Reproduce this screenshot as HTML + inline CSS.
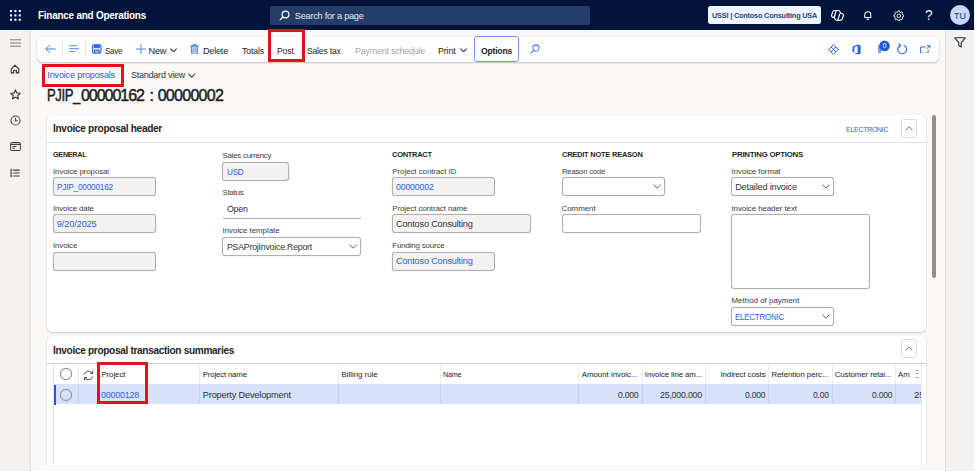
<!DOCTYPE html>
<html lang="en">
<head>
<meta charset="utf-8">
<title>Invoice proposals - Finance and Operations</title>
<style>
*{box-sizing:border-box;margin:0;padding:0}
html,body{width:977px;height:472px;overflow:hidden;background:#fff}
body{font-family:"Liberation Sans",sans-serif;color:#201f1e;position:relative}
#app{position:absolute;left:0;top:0;width:974px;height:470.6px;background:#faf9f8;overflow:hidden}
.abs{position:absolute}
.t{position:absolute;white-space:nowrap;line-height:1}
/* top bar */
#topbar{left:0;top:0;width:974px;height:30px;background:#03143a}
#search{left:270.3px;top:5.8px;width:320px;height:18.8px;background:#253d69;border-radius:2.5px}
#company{left:708.4px;top:5.7px;width:113px;height:18.8px;background:#eef3fd;border-radius:2.5px}
/* left nav */
#leftnav{left:0;top:30px;width:30.8px;height:441px;background:#f3f2f1;box-shadow:inset -1.5px 0 0 #e5e3e1}
#rightpane{left:944.6px;top:30px;width:29.4px;height:441px;background:#f3f2f1;border-left:1px solid #e1dfdd}
/* toolbar */
#toolbar{left:37px;top:37px;width:902px;height:25px;background:#fff;border-radius:5px;box-shadow:0 1px 2px rgba(0,0,0,.22),0 0 1px rgba(0,0,0,.15)}
.tb{font-size:9.5px;color:#242424;top:45px}
.red{position:absolute;border:3px solid #e3111c}
/* cards */
.card{position:absolute;background:#fff;border-radius:5px;box-shadow:0 1px 2px rgba(0,0,0,.18),0 0 1px rgba(0,0,0,.18)}
.sep{position:absolute;height:1px;background:#e1dfdd}
.h{font-size:11px;font-weight:bold;color:#242424}
.g{font-size:8px;font-weight:bold;color:#201f1e}
.l{font-size:8px;color:#484644}
.in{position:absolute;border:1px solid #b1afad;border-radius:3px;background:#fff;height:19.4px;box-shadow:0 0 1px #bbb9b7}
.ro{background:#f3f2f1}
.v{font-size:9.5px;color:#323130}
.b{color:#2b63d9}
.colbtn{position:absolute;width:16.2px;height:19.2px;border:1px solid #dddbd9;border-radius:3px;background:#fff}
.vl{position:absolute;width:1px;background:rgba(0,0,0,.075)}
.gh{font-size:8px;color:#242424;top:371px}
.gd{font-size:9.5px;color:#323130;top:390px}
</style>
</head>
<body>
<div id="app">

<!-- TOP BAR -->
<div id="topbar" class="abs"></div>
<svg class="abs" style="left:10.2px;top:10.2px" width="10.8" height="10.8" viewBox="0 0 11.2 11.2" fill="#fff">
<rect x="0" y="0" width="2.2" height="2.2"/><rect x="4.5" y="0" width="2.2" height="2.2"/><rect x="9" y="0" width="2.2" height="2.2"/>
<rect x="0" y="4.5" width="2.2" height="2.2"/><rect x="4.5" y="4.5" width="2.2" height="2.2"/><rect x="9" y="4.5" width="2.2" height="2.2"/>
<rect x="0" y="9" width="2.2" height="2.2"/><rect x="4.5" y="9" width="2.2" height="2.2"/><rect x="9" y="9" width="2.2" height="2.2"/>
</svg>
<div id="search" class="abs"></div>
<svg class="abs" style="left:279px;top:10px" width="11" height="11" viewBox="0 0 11 11" fill="none" stroke="#fff" stroke-width="1.2"><circle cx="6.5" cy="4.5" r="3.4"/><path d="M4 7 L0.8 10.2"/></svg>
<div id="company" class="abs"></div>
<!-- topbar icons -->
<svg class="abs" style="left:830px;top:9px" width="14" height="13" viewBox="0 0 14 13" fill="none" stroke="#fff" stroke-width="1.2"><path d="M5 1.5 h3.2 a2 2 0 0 1 1.9 1.4 l0.5 1.6 h1 a1.8 1.8 0 0 1 1.7 2.4 l-1 3 a2 2 0 0 1 -1.9 1.4 h-3.6 a2 2 0 0 1 -1.9 -1.4 l-0.5 -1.6 h-1 a1.8 1.8 0 0 1 -1.7 -2.4 l1 -3 a2 2 0 0 1 1.9 -1.4 z"/><path d="M6.2 1.8 l-2 6.5 M9.8 4.6 l-2 6.5"/></svg>
<svg class="abs" style="left:863px;top:10.3px" width="9.6" height="11" viewBox="0 0 12 13" fill="none" stroke="#fff" stroke-width="1.3"><path d="M2.2 9 V5.6 a3.8 3.8 0 0 1 7.6 0 V9 z"/><path d="M4.7 10.5 a1.4 1.4 0 0 0 2.6 0" /></svg>
<svg class="abs" style="left:892.6px;top:9.6px" width="11.6" height="11.6" viewBox="0 0 13 13" fill="none" stroke="#fff" stroke-linejoin="round"><path d="M10.89 5.52 L12.06 5.80 L12.06 7.20 L10.89 7.48 L10.30 8.91 L10.92 9.93 L9.93 10.92 L8.91 10.30 L7.48 10.89 L7.20 12.06 L5.80 12.06 L5.52 10.89 L4.09 10.30 L3.07 10.92 L2.08 9.93 L2.70 8.91 L2.11 7.48 L0.94 7.20 L0.94 5.80 L2.11 5.52 L2.70 4.09 L2.08 3.07 L3.07 2.08 L4.09 2.70 L5.52 2.11 L5.80 0.94 L7.20 0.94 L7.48 2.11 L8.91 2.70 L9.93 2.08 L10.92 3.07 L10.30 4.09 Z" stroke-width="1"/><circle cx="6.5" cy="6.5" r="2" stroke-width="1"/></svg>
<div class="t" style="left:925px;top:9px;font-size:13.8px;color:#f1f3f8">?</div>
<div class="abs" style="left:949.8px;top:5px;width:20.4px;height:20.4px;border-radius:50%;background:#c9d7f6"></div>

<!-- LEFT NAV -->
<div id="leftnav" class="abs"></div>
<svg class="abs" style="left:10px;top:39px" width="11" height="8" viewBox="0 0 11 8" stroke="#7a7876" stroke-width="1"><path d="M0 0.8h11M0 4h11M0 7.2h11"/></svg>
<svg class="abs" style="left:10px;top:64px" width="10" height="10" viewBox="0 0 12 12" fill="none" stroke="#323130" stroke-width="1.3"><path d="M1.5 5.8 L6 1.6 L10.5 5.8 V10.6 H7.6 V7.4 H4.4 V10.6 H1.5 Z"/></svg>
<svg class="abs" style="left:9.5px;top:89px" width="11" height="11" viewBox="0 0 12 12" fill="none" stroke="#323130" stroke-width="1.2" stroke-linejoin="round"><path d="M6 1 L7.5 4.3 L11.1 4.7 L8.4 7.1 L9.2 10.7 L6 8.9 L2.8 10.7 L3.6 7.1 L0.9 4.7 L4.5 4.3 Z"/></svg>
<svg class="abs" style="left:9.5px;top:115px" width="11" height="11" viewBox="0 0 12 12" fill="none" stroke="#484644" stroke-width="1.1"><circle cx="6" cy="6" r="5"/><path d="M6 3v3.3h2.4"/></svg>
<svg class="abs" style="left:9.5px;top:142px" width="11" height="9" viewBox="0 0 12 10" fill="none" stroke="#323130" stroke-width="1.1"><rect x="0.6" y="0.6" width="10.8" height="8.8" rx="0.8"/><path d="M0.6 2.6h10.8" stroke-width="1.3"/><path d="M2.6 5h4.6M2.6 7h2.6"/></svg>
<svg class="abs" style="left:10px;top:167.5px" width="10" height="10" viewBox="0 0 12 11" fill="none" stroke="#323130" stroke-width="1.1"><path d="M1.2 0.5v10"/><path d="M1.2 2h1.6M1.2 5.5h1.6M1.2 9h1.6"/><path d="M4 2h7.5M4 5.5h7.5M4 9h7.5" stroke-width="1.3"/></svg>

<!-- RIGHT PANE -->
<div id="rightpane" class="abs"></div>
<svg class="abs" style="left:954px;top:37px" width="12" height="11" viewBox="0 0 12 11" fill="none" stroke="#323130" stroke-width="1.1" stroke-linejoin="round"><path d="M0.8 0.8 H11.2 L7.2 5.6 V10 L4.8 8.6 V5.6 Z"/></svg>

<!-- TOOLBAR -->
<div id="toolbar" class="abs"></div>
<svg class="abs" style="left:45.3px;top:44.2px" width="11" height="10" viewBox="0 0 11 10" fill="none" stroke="#3f76e4" stroke-width="0.95"><path d="M5 0.8 L0.9 5 L5 9.2 M0.9 5 H10.6"/></svg>
<div class="vl" style="left:62px;top:40px;height:18px;background:#e8e6e4"></div>
<svg class="abs" style="left:68.5px;top:45.3px" width="10.5" height="7.4" viewBox="0 0 11 8" fill="none" stroke="#3f76e4" stroke-width="0.95"><path d="M0 0.8h8.5M0 4h11M0 7.2h6.5"/></svg>
<div class="vl" style="left:85px;top:40px;height:18px;background:#e8e6e4"></div>
<svg class="abs" style="left:92px;top:44px" width="9.6" height="9.8" viewBox="0 0 10 10" fill="none" stroke="#2f68dc" stroke-width="1.1"><rect x="0.6" y="0.6" width="8.8" height="8.8" rx="1.2" fill="#dfe9fb"/><path d="M2.4 0.8v2.8h5.2v-2.8" fill="#2f68dc"/><path d="M2.6 9.2v-3h4.8v3" fill="#8fb0f0"/></svg>
<svg class="abs" style="left:135.8px;top:44px" width="10" height="10" viewBox="0 0 10 10" stroke="#3f76e4" stroke-width="0.85"><path d="M5 0v10M0 5h10"/></svg>
<svg class="abs" style="left:169.5px;top:47.8px" width="7.2" height="4.5" viewBox="0 0 8 5" fill="none" stroke="#323130" stroke-width="1.25"><path d="M0.5 0.6 L4 4.2 L7.5 0.6"/></svg>
<svg class="abs" style="left:190.2px;top:43.5px" width="9" height="10.8" viewBox="0 0 9 11" fill="none" stroke="#4a7ee6" stroke-width="1"><path d="M0.3 2h8.4M3 1.8v-1.2h3v1.2"/><path d="M1.2 2.2 l0.5 8.2 h5.6 l0.5 -8.2z" fill="#b4c9f4"/><path d="M3.4 4.2v4M5.6 4.2v4" stroke-width="0.7" stroke="#7fa3ec"/></svg>
<svg class="abs" style="left:459.5px;top:47.8px" width="7.2" height="4.5" viewBox="0 0 8 5" fill="none" stroke="#323130" stroke-width="1.25"><path d="M0.5 0.6 L4 4.2 L7.5 0.6"/></svg>
<div class="abs" style="left:473.7px;top:36.2px;width:45.4px;height:25.6px;border:1px solid #6d98ee;border-radius:3px;background:#fff"></div>
<svg class="abs" style="left:530px;top:44px" width="10" height="10" viewBox="0 0 10 10" fill="none" stroke="#4a7be0" stroke-width="1.1"><circle cx="6" cy="4" r="3.1"/><path d="M3.7 6.3 L0.6 9.4"/></svg>
<!-- toolbar right icons -->
<svg class="abs" style="left:828px;top:44px" width="11" height="11" viewBox="0 0 11 11" fill="none" stroke="#2b63d9" stroke-width="1"><path d="M5.5 0.7 L10.3 5.5 L5.5 10.3 L0.7 5.5 Z"/><path d="M3.1 3.1 L7.9 7.9 M7.9 3.1 L3.1 7.9"/></svg>
<svg class="abs" style="left:852px;top:44px" width="9" height="11" viewBox="0 0 9 11" fill="#2b63d9"><path d="M0.5 2.6 L5.6 0.4 L8.6 1.3 V9.7 L5.6 10.6 L0.5 8.6 L5.6 9.2 V2 L2.4 2.9 V7.6 L0.5 8.6 Z"/></svg>
<svg class="abs" style="left:876px;top:40px" width="15" height="15" viewBox="0 0 15 15"><path d="M2 5 v7 a1.6 1.6 0 0 0 3.2 0 V5z" fill="#7fa3ec"/><circle cx="8.5" cy="5.9" r="5.3" fill="#1f5bd8"/><text x="8.5" y="8.2" font-size="6.5" fill="#fff" text-anchor="middle" font-family="Liberation Sans, sans-serif">0</text></svg>
<svg class="abs" style="left:897px;top:43px" width="11" height="12" viewBox="0 0 11 12" fill="none" stroke="#2b63d9" stroke-width="1.1"><path d="M3.4 2.4 A4.4 4.4 0 1 0 6.6 2.2"/><path d="M1.6 0.8 L3.6 2.4 L2 4.3"/></svg>
<svg class="abs" style="left:920px;top:44.5px" width="10.5" height="8.8" viewBox="0 0 12 10" fill="none" stroke="#2b63d9" stroke-width="1.1"><path d="M6.5 2.2 H0.7 V9.3 H9.3 V5.5"/><path d="M8 0.7 H11.3 V4 M11.3 0.7 L7.6 4.4"/></svg>
<div class="red" style="left:267.7px;top:29.3px;width:37.7px;height:32.6px"></div>

<!-- BREADCRUMB + TITLE -->
<div class="red" style="left:41.9px;top:64.3px;width:82.1px;height:22.3px"></div>
<svg class="abs" style="left:188.2px;top:73px" width="7.6" height="5" viewBox="0 0 8 5" fill="none" stroke="#484644" stroke-width="1.2"><path d="M0.5 0.6 L4 4.2 L7.5 0.6"/></svg>

<!-- CARD 1 -->
<div class="card" style="left:46.6px;top:115.4px;width:879.8px;height:216.4px"></div>
<div class="sep" style="left:47px;top:142.1px;width:879px"></div>
<div class="colbtn" style="left:900.8px;top:118.5px"></div>
<svg class="abs" style="left:904.8px;top:125.8px" width="8" height="5" viewBox="0 0 8 5" fill="none" stroke="#7a7876" stroke-width="1"><path d="M0.5 4.4 L4 0.8 L7.5 4.4"/></svg>
<!-- scrollbar -->
<div class="abs" style="left:931.8px;top:114.6px;width:4.5px;height:163.4px;border-radius:2.2px;background:#918f8d"></div>

<!-- col1 -->
<div class="in ro" style="left:53px;top:177px;width:103px"></div>
<div class="in ro" style="left:53px;top:214px;width:103px"></div>
<div class="in ro" style="left:53px;top:252px;width:103px"></div>
<!-- col2 -->
<div class="in ro" style="left:222px;top:162px;width:67px"></div>
<div class="abs" style="left:222.5px;top:217.6px;width:138px;height:1.2px;background:#b0aeac"></div>
<div class="in" style="left:222px;top:237px;width:139px"></div>
<svg class="abs" style="left:349px;top:244px" width="8" height="5" viewBox="0 0 8 5" fill="none" stroke="#605e5c" stroke-width="1"><path d="M0.5 0.6 L4 4.2 L7.5 0.6"/></svg>
<!-- col3 -->
<div class="in ro" style="left:392px;top:177px;width:103px"></div>
<div class="in ro" style="left:392px;top:214px;width:139px"></div>
<div class="in ro" style="left:392px;top:252px;width:103px"></div>
<!-- col4 -->
<div class="in" style="left:562px;top:177px;width:103px"></div>
<svg class="abs" style="left:653px;top:184px" width="8" height="5" viewBox="0 0 8 5" fill="none" stroke="#605e5c" stroke-width="1"><path d="M0.5 0.6 L4 4.2 L7.5 0.6"/></svg>
<div class="in" style="left:562px;top:214px;width:139px"></div>
<!-- col5 -->
<div class="in" style="left:731px;top:177px;width:103px"></div>
<svg class="abs" style="left:822px;top:184px" width="8" height="5" viewBox="0 0 8 5" fill="none" stroke="#605e5c" stroke-width="1"><path d="M0.5 0.6 L4 4.2 L7.5 0.6"/></svg>
<div class="in" style="left:731px;top:214px;width:139px;height:75px"></div>
<div class="in" style="left:731px;top:307px;width:103px"></div>
<svg class="abs" style="left:822px;top:314px" width="8" height="5" viewBox="0 0 8 5" fill="none" stroke="#605e5c" stroke-width="1"><path d="M0.5 0.6 L4 4.2 L7.5 0.6"/></svg>

<!-- CARD 2 -->
<div class="card" style="left:46.6px;top:336.2px;width:879.8px;height:150px"></div>
<div class="colbtn" style="left:900.8px;top:338.9px"></div>
<svg class="abs" style="left:904.8px;top:346px" width="8" height="5" viewBox="0 0 8 5" fill="none" stroke="#7a7876" stroke-width="1"><path d="M0.5 4.4 L4 0.8 L7.5 4.4"/></svg>
<div class="sep" style="left:47px;top:363px;width:879px;background:#d2d0ce"></div>
<!-- grid -->
<div class="abs" style="left:54px;top:384.3px;width:867px;height:20px;background:#d5e2fa"></div>
<div class="abs" style="left:53.4px;top:384.5px;width:2.4px;height:20.3px;background:#1f5bd8"></div>
<div class="vl" style="left:53px;top:364px;height:110px;background:#e4e2e0"></div>
<div class="vl" style="left:921px;top:364px;height:110px"></div>
<div class="vl" style="left:78px;top:364px;height:41px"></div>
<div class="vl" style="left:199px;top:364px;height:41px"></div>
<div class="vl" style="left:338px;top:364px;height:41px"></div>
<div class="vl" style="left:440px;top:364px;height:41px"></div>
<div class="vl" style="left:578px;top:364px;height:41px"></div>
<div class="vl" style="left:642px;top:364px;height:41px"></div>
<div class="vl" style="left:705px;top:364px;height:41px"></div>
<div class="vl" style="left:768px;top:364px;height:41px"></div>
<div class="vl" style="left:832px;top:364px;height:41px"></div>
<div class="vl" style="left:895px;top:364px;height:41px"></div>
<div class="abs" style="left:59.7px;top:368.2px;width:12px;height:12px;border:1px solid #918f8d;border-radius:50%;background:#fff;box-shadow:0 0 .8px #918f8d"></div>
<div class="abs" style="left:59.7px;top:388.6px;width:12px;height:12px;border:1px solid #918f8d;border-radius:50%;background:transparent;box-shadow:0 0 .8px #918f8d"></div>
<svg class="abs" style="left:83px;top:370px" width="11" height="11" viewBox="0 0 11 11" fill="none" stroke="#3b3a39" stroke-width="0.9"><path d="M1.2 4.6 A4.4 4.4 0 0 1 9.2 3.2"/><path d="M9.8 6.4 A4.4 4.4 0 0 1 1.8 7.8"/><path d="M9.6 0.8 V3.4 H7" /><path d="M1.4 10.2 V7.6 H4"/></svg>
<div class="t gh" style="left:912px;top:369px;font-size:10px">⋮</div>
<div class="abs" style="left:896px;top:385px;width:25px;height:20px;overflow:hidden"><div class="t gd" style="left:18px;top:5px">25</div></div>
<div class="red" style="left:96.6px;top:362.2px;width:51.5px;height:42.3px"></div>

<div class="t" style="left:37.5px;top:11.1px;font-size:10.4px;letter-spacing:-0.256px;color:#fff;font-weight:bold;transform:scaleX(0.958);transform-origin:0 0">Finance and Operations</div>
<div class="t" style="left:294.8px;top:12.3px;font-size:9.2px;letter-spacing:-0.250px;color:#e6eaf2">Search for a page</div>
<div class="t" style="left:712.3px;top:11.9px;font-size:7.8px;letter-spacing:-0.194px;color:#2a4580;font-weight:bold;transform:scaleX(0.937);transform-origin:0 0">USSI | Contoso Consulting USA</div>
<div class="t" style="left:954.0px;top:11.7px;font-size:9px;letter-spacing:-0.100px;color:#1b3a7a">TU</div>
<div class="t" style="left:105.0px;top:46.7px;font-size:9.2px;letter-spacing:-0.249px;color:#242424;transform:scaleX(0.867);transform-origin:0 0">Save</div>
<div class="t" style="left:148.6px;top:46.7px;font-size:9.2px;letter-spacing:-0.264px;color:#242424">New</div>
<div class="t" style="left:203.0px;top:46.7px;font-size:9.2px;letter-spacing:-0.260px;color:#242424">Delete</div>
<div class="t" style="left:241.8px;top:46.7px;font-size:9.2px;letter-spacing:-0.190px;color:#242424;transform:scaleX(0.963);transform-origin:0 0">Totals</div>
<div class="t" style="left:277.4px;top:46.7px;font-size:9.2px;letter-spacing:-0.219px;color:#242424;transform:scaleX(0.948);transform-origin:0 0">Post</div>
<div class="t" style="left:307.4px;top:46.7px;font-size:9.2px;letter-spacing:-0.200px;color:#242424;transform:scaleX(0.933);transform-origin:0 0">Sales tax</div>
<div class="t" style="left:354.8px;top:46.7px;font-size:9.2px;letter-spacing:-0.225px;color:#a6a4a2;transform:scaleX(0.972);transform-origin:0 0">Payment schedule</div>
<div class="t" style="left:438.0px;top:46.7px;font-size:9.2px;letter-spacing:-0.180px;color:#242424;transform:scaleX(0.972);transform-origin:0 0">Print</div>
<div class="t" style="left:480.9px;top:46.7px;font-size:9.2px;letter-spacing:-0.236px;color:#242424;font-weight:bold;transform:scaleX(0.938);transform-origin:0 0">Options</div>
<div class="t" style="left:47.3px;top:71.4px;font-size:9.2px;letter-spacing:-0.224px;color:#2b63d9">Invoice proposals</div>
<div class="t" style="left:130.7px;top:71.4px;font-size:9.2px;letter-spacing:-0.213px;color:#323130;transform:scaleX(0.974);transform-origin:0 0">Standard view</div>
<div class="t" style="left:53.0px;top:124.4px;font-size:10.1px;letter-spacing:-0.310px;color:#242424;font-weight:bold">Invoice proposal header</div>
<div class="t" style="left:846.0px;top:125.6px;font-size:7.4px;letter-spacing:-0.227px;color:#2b63d9;transform:scaleX(0.932);transform-origin:0 0">ELECTRONIC</div>
<div class="t" style="left:53.0px;top:151.0px;font-size:8.0px;letter-spacing:-0.266px;color:#201f1e;font-weight:bold;transform:scaleX(0.896);transform-origin:0 0">GENERAL</div>
<div class="t" style="left:53.0px;top:168.0px;font-size:7.9px;letter-spacing:-0.092px;color:#3b3a39">Invoice proposal</div>
<div class="t" style="left:57.0px;top:183.0px;font-size:9.2px;letter-spacing:-0.240px;color:#2b63d9;transform:scaleX(0.899);transform-origin:0 0">PJIP_00000162</div>
<div class="t" style="left:53.0px;top:205.0px;font-size:7.9px;letter-spacing:-0.147px;color:#3b3a39">Invoice date</div>
<div class="t" style="left:56.8px;top:220.1px;font-size:9.2px;letter-spacing:-0.119px;color:#2b63d9">9/20/2025</div>
<div class="t" style="left:53.0px;top:242.4px;font-size:7.9px;letter-spacing:-0.117px;color:#3b3a39">Invoice</div>
<div class="t" style="left:222.6px;top:152.4px;font-size:7.9px;letter-spacing:-0.256px;color:#3b3a39">Sales currency</div>
<div class="t" style="left:226.5px;top:167.8px;font-size:9.2px;letter-spacing:-0.308px;color:#2b63d9;transform:scaleX(0.893);transform-origin:0 0">USD</div>
<div class="t" style="left:222.6px;top:189.2px;font-size:7.9px;letter-spacing:-0.229px;color:#3b3a39">Status</div>
<div class="t" style="left:226.5px;top:205.1px;font-size:9.2px;letter-spacing:-0.268px;color:#323130;transform:scaleX(0.962);transform-origin:0 0">Open</div>
<div class="t" style="left:222.6px;top:227.4px;font-size:7.9px;letter-spacing:-0.029px;color:#3b3a39">Invoice template</div>
<div class="t" style="left:226.5px;top:242.7px;font-size:9.2px;letter-spacing:-0.213px;color:#323130;transform:scaleX(0.950);transform-origin:0 0">PSAProjInvoice.Report</div>
<div class="t" style="left:392.3px;top:151.0px;font-size:8.0px;letter-spacing:-0.267px;color:#201f1e;font-weight:bold;transform:scaleX(0.931);transform-origin:0 0">CONTRACT</div>
<div class="t" style="left:392.3px;top:168.0px;font-size:7.9px;letter-spacing:-0.048px;color:#3b3a39">Project contract ID</div>
<div class="t" style="left:396.0px;top:183.0px;font-size:9.2px;letter-spacing:-0.243px;color:#2b63d9;transform:scaleX(0.966);transform-origin:0 0">00000002</div>
<div class="t" style="left:392.3px;top:205.0px;font-size:7.9px;letter-spacing:-0.083px;color:#3b3a39">Project contract name</div>
<div class="t" style="left:396.0px;top:220.1px;font-size:9.2px;letter-spacing:-0.199px;color:#323130">Contoso Consulting</div>
<div class="t" style="left:392.3px;top:242.4px;font-size:7.9px;letter-spacing:-0.150px;color:#3b3a39">Funding source</div>
<div class="t" style="left:396.0px;top:257.0px;font-size:9.2px;letter-spacing:-0.199px;color:#2b63d9">Contoso Consulting</div>
<div class="t" style="left:561.6px;top:151.0px;font-size:8.0px;letter-spacing:-0.240px;color:#201f1e;font-weight:bold;transform:scaleX(0.933);transform-origin:0 0">CREDIT NOTE REASON</div>
<div class="t" style="left:561.6px;top:168.0px;font-size:7.9px;letter-spacing:-0.201px;color:#3b3a39;transform:scaleX(0.971);transform-origin:0 0">Reason code</div>
<div class="t" style="left:561.6px;top:205.0px;font-size:7.9px;letter-spacing:-0.029px;color:#3b3a39">Comment</div>
<div class="t" style="left:731.5px;top:151.0px;font-size:8.0px;letter-spacing:-0.228px;color:#201f1e;font-weight:bold;transform:scaleX(0.975);transform-origin:0 0">PRINTING OPTIONS</div>
<div class="t" style="left:731.5px;top:168.0px;font-size:7.9px;letter-spacing:-0.040px;color:#3b3a39">Invoice format</div>
<div class="t" style="left:735.2px;top:183.0px;font-size:9.2px;letter-spacing:-0.198px;color:#323130">Detailed invoice</div>
<div class="t" style="left:731.5px;top:205.0px;font-size:7.9px;letter-spacing:-0.068px;color:#3b3a39">Invoice header text</div>
<div class="t" style="left:731.5px;top:297.4px;font-size:7.9px;letter-spacing:0.026px;color:#3b3a39">Method of payment</div>
<div class="t" style="left:735.2px;top:313.0px;font-size:8.6px;letter-spacing:-0.264px;color:#2b63d9;transform:scaleX(0.929);transform-origin:0 0">ELECTRONIC</div>
<div class="t" style="left:53.0px;top:345.6px;font-size:10.1px;letter-spacing:-0.330px;color:#242424;font-weight:bold">Invoice proposal transaction summaries</div>
<div class="t" style="left:101.4px;top:370.9px;font-size:7.9px;letter-spacing:-0.080px;color:#242424">Project</div>
<div class="t" style="left:202.7px;top:370.9px;font-size:7.9px;letter-spacing:-0.192px;color:#242424">Project name</div>
<div class="t" style="left:341.6px;top:370.9px;font-size:7.9px;letter-spacing:-0.034px;color:#242424">Billing rule</div>
<div class="t" style="left:443.3px;top:370.9px;font-size:7.9px;letter-spacing:-0.251px;color:#242424;transform:scaleX(0.907);transform-origin:0 0">Name</div>
<div class="t" style="left:581.7px;top:370.9px;font-size:7.9px;letter-spacing:-0.021px;color:#242424">Amount invoic...</div>
<div class="t" style="left:644.8px;top:370.9px;font-size:7.9px;letter-spacing:-0.112px;color:#242424">Invoice line am...</div>
<div class="t" style="left:720.5px;top:370.9px;font-size:7.9px;letter-spacing:-0.107px;color:#242424">Indirect costs</div>
<div class="t" style="left:771.6px;top:370.9px;font-size:7.9px;letter-spacing:-0.071px;color:#242424">Retention perc...</div>
<div class="t" style="left:834.7px;top:370.9px;font-size:7.9px;letter-spacing:-0.102px;color:#242424">Customer retai...</div>
<div class="t" style="left:898.0px;top:370.9px;font-size:7.9px;letter-spacing:0.078px;color:#242424">Am</div>
<div class="t" style="left:101.4px;top:390.5px;font-size:9.2px;letter-spacing:-0.243px;color:#2b63d9;transform:scaleX(0.976);transform-origin:0 0">00000128</div>
<div class="t" style="left:202.8px;top:390.5px;font-size:9.2px;letter-spacing:-0.171px;color:#323130">Property Development</div>
<div class="t" style="left:617.6px;top:390.5px;font-size:9.2px;letter-spacing:-0.219px;color:#323130;transform:scaleX(0.931);transform-origin:0 0">0.000</div>
<div class="t" style="left:660.3px;top:390.5px;font-size:9.2px;letter-spacing:-0.219px;color:#323130;transform:scaleX(0.959);transform-origin:0 0">25,000.000</div>
<div class="t" style="left:745.3px;top:390.5px;font-size:9.2px;letter-spacing:-0.219px;color:#323130;transform:scaleX(0.931);transform-origin:0 0">0.000</div>
<div class="t" style="left:813.2px;top:390.5px;font-size:9.2px;letter-spacing:-0.213px;color:#323130;transform:scaleX(0.927);transform-origin:0 0">0.00</div>
<div class="t" style="left:871.6px;top:390.5px;font-size:9.2px;letter-spacing:-0.219px;color:#323130;transform:scaleX(0.931);transform-origin:0 0">0.000</div>
<div class="t" style="left:47.8px;top:87.9px;font-size:16px;color:#201f1e;-webkit-text-stroke:0.45px #201f1e;width:180px;height:16px"><span style="position:absolute;left:-0.8px;top:0;letter-spacing:-0.489px;white-space:pre;transform:scaleX(0.82);transform-origin:0 0">PJIP_</span><span style="position:absolute;left:33.2px;top:0;letter-spacing:-1.023px;white-space:pre">00000162</span><span style="position:absolute;left:98.7px;top:0;letter-spacing:-1.448px;white-space:pre"> : </span><span style="position:absolute;left:109.9px;top:0;letter-spacing:-0.711px;white-space:pre">00000002</span></div>
<div class="abs" style="left:32px;top:465.4px;width:912px;height:6px;background:#faf9f8"></div>
</div>
</body>
</html>
